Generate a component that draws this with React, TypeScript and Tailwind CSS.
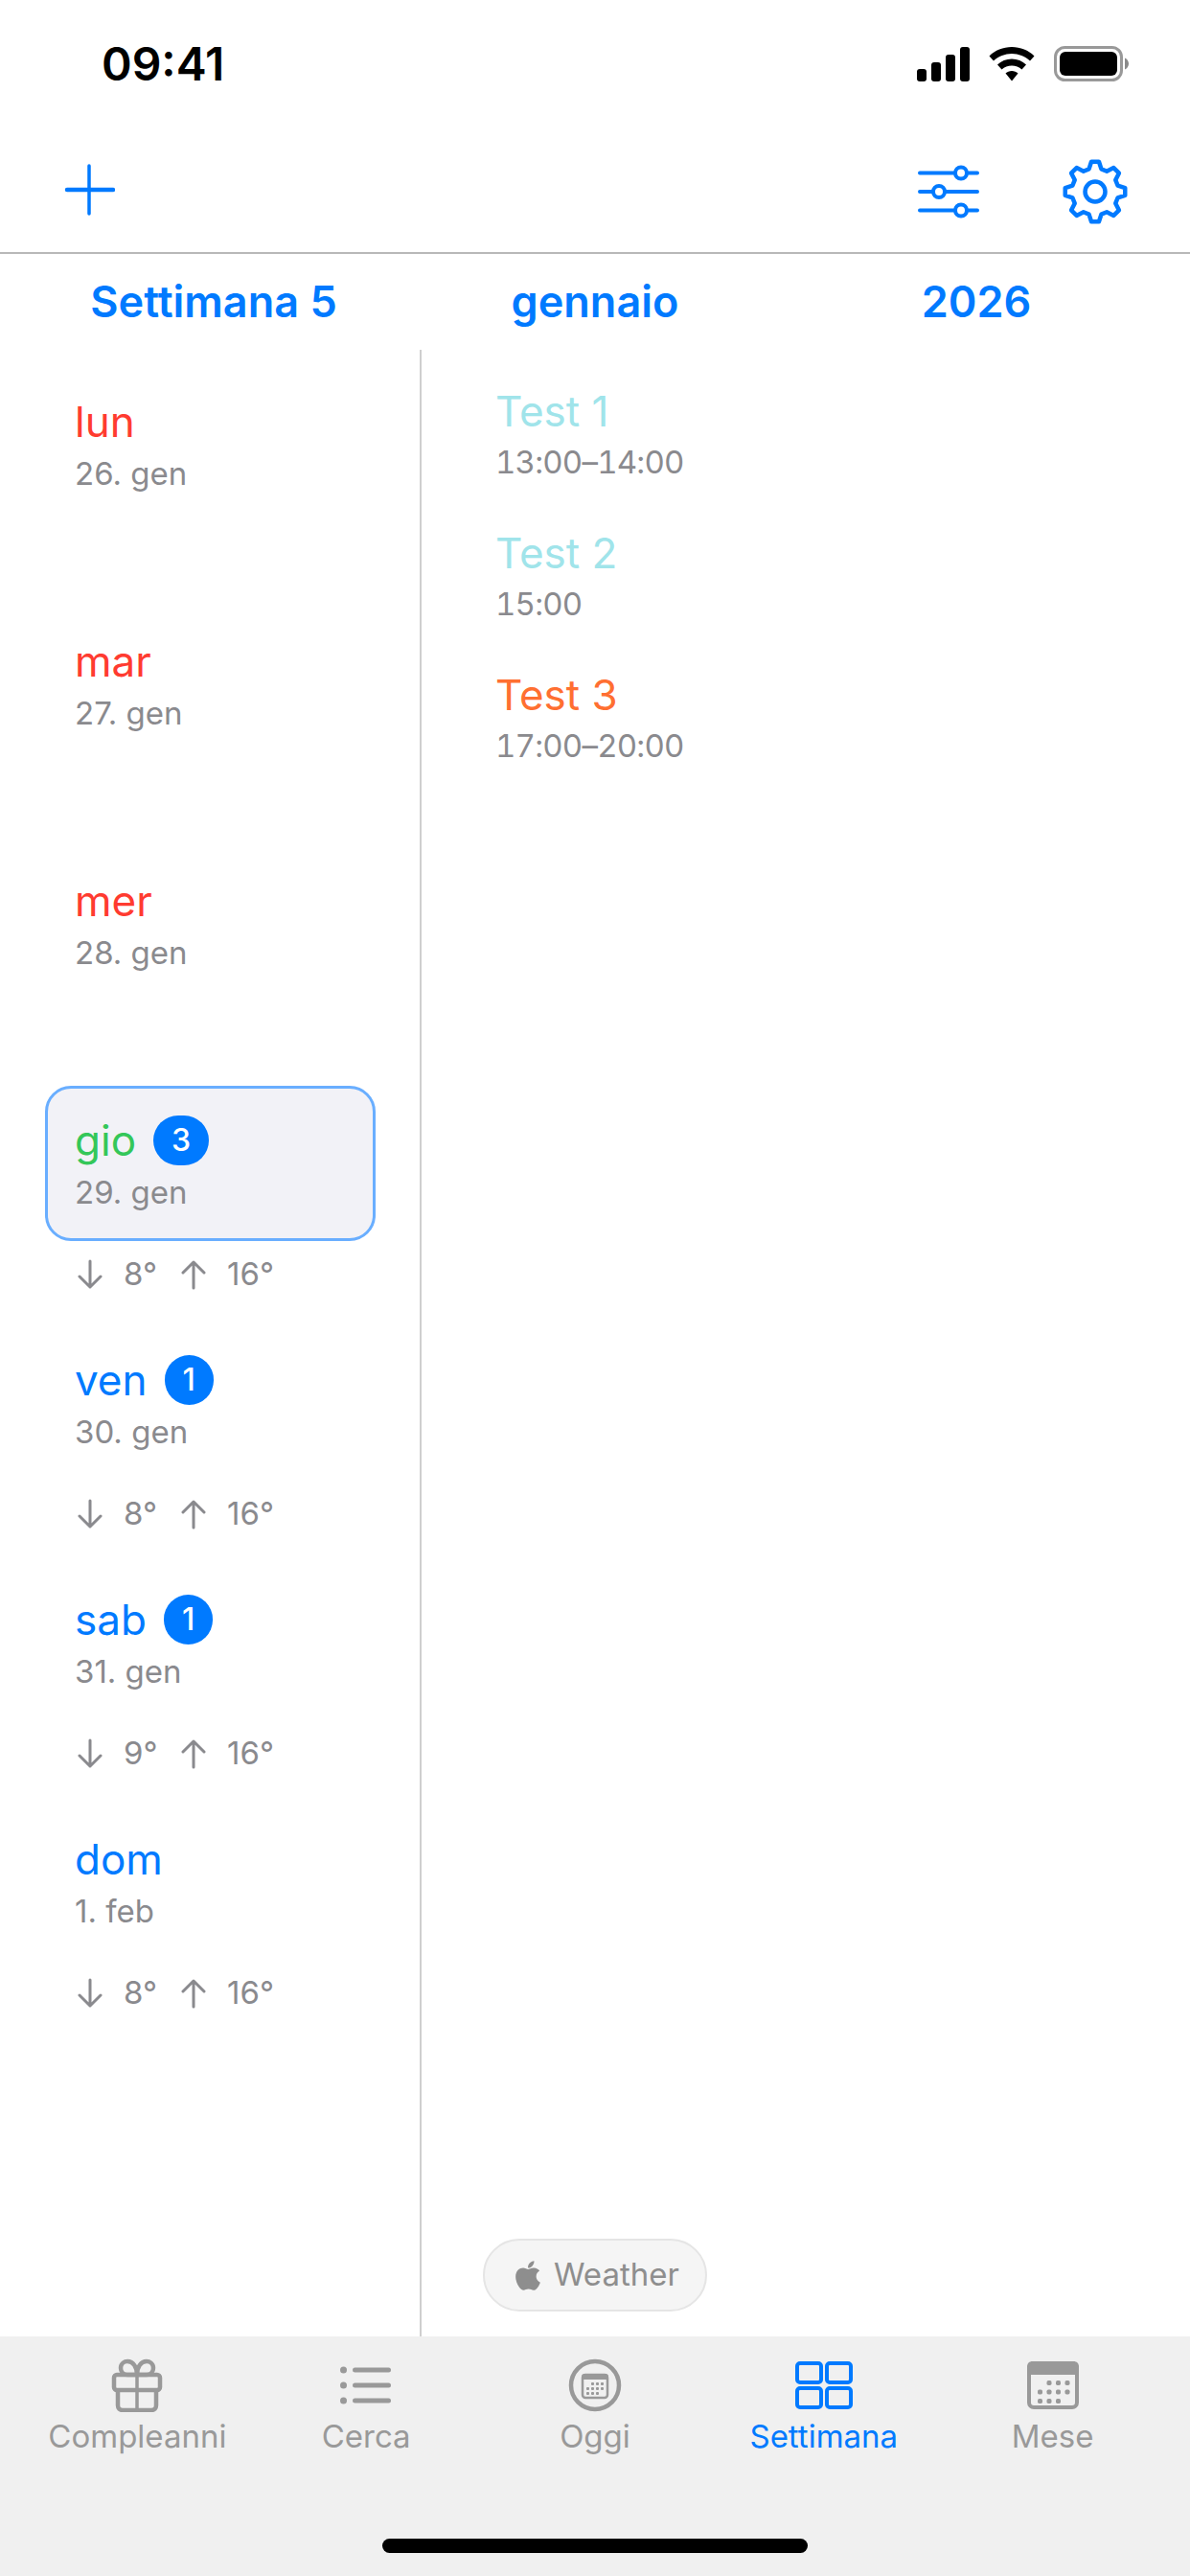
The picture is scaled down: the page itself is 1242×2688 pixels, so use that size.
import React from "react";

const BLUE = "#007aff";
const GREY = "#999999";

function gearPath(cx: number, cy: number) {
  const teeth = 8;
  const pts: string[] = [];
  for (let i = 0; i < teeth; i++) {
    const a = (i / teeth) * Math.PI * 2 - Math.PI / 2;
    const step = (Math.PI * 2) / teeth;
    const list: [number, number][] = [
      [a - step * 0.34, 24.5],
      [a - step * 0.16, 31.5],
      [a + step * 0.16, 31.5],
      [a + step * 0.34, 24.5],
    ];
    list.forEach(([t, r]) => {
      pts.push(`${(cx + Math.cos(t) * r).toFixed(2)} ${(cy + Math.sin(t) * r).toFixed(2)}`);
    });
  }
  return "M" + pts.join("L") + "Z";
}

function Plus() {
  return (
    <svg width="54" height="54" viewBox="0 0 54 54" fill="none" stroke={BLUE} strokeLinecap="round">
      <path d="M27 2V52" strokeWidth="3.5" />
      <path d="M4 27H52" strokeWidth="4.5" />
    </svg>
  );
}

function Sliders() {
  return (
    <svg width="66" height="56" viewBox="0 0 66 56" fill="none" stroke={BLUE} strokeWidth="4" strokeLinecap="round">
      <path d="M2 8.500H62M2 28H62M2 47.500H62" />
      <circle cx="45" cy="8.500" r="6" fill="#fff" />
      <circle cx="22" cy="28" r="6" fill="#fff" />
      <circle cx="45" cy="47.500" r="6" fill="#fff" />
    </svg>
  );
}

function Gear() {
  return (
    <svg width="70" height="70" viewBox="0 0 70 70" fill="none" stroke={BLUE} strokeWidth="4.500" strokeLinejoin="round">
      <path d={gearPath(35, 35)} />
      <circle cx="35" cy="35" r="10.500" />
    </svg>
  );
}

function StatusIcons() {
  return (
    <div className="flex items-center">
      <svg width="56" height="36" viewBox="0 0 56 36" fill="#000">
        <rect x="0" y="23" width="10" height="13" rx="3" />
        <rect x="15" y="16" width="10" height="20" rx="3" />
        <rect x="30" y="8" width="10" height="28" rx="3" />
        <rect x="45" y="0" width="10" height="36" rx="3" />
      </svg>
      <svg className="ml-[19px]" width="48" height="36" viewBox="0 0 48 36" fill="#000">
        <path d="M24 0C33 0 41.500 3.500 47.500 9.500L43 14.500C37.800 9.800 31.200 7 24 7C16.800 7 10.200 9.800 5 14.500L0.500 9.500C6.500 3.500 15 0 24 0Z" />
        <path d="M24 12.500C29.800 12.500 35 14.700 39 18.500L34.500 23.500C31.600 21 28 19.500 24 19.500C20 19.500 16.400 21 13.500 23.500L9 18.500C13 14.700 18.200 12.500 24 12.500Z" />
        <path d="M24 25C26.500 25 28.800 25.900 30.500 27.500L24 35.500L17.500 27.500C19.200 25.900 21.500 25 24 25Z" />
      </svg>
      <svg className="ml-[20px]" width="80" height="38" viewBox="0 0 80 38">
        <rect x="1.500" y="1.500" width="69" height="34" rx="10" fill="none" stroke="#999" strokeWidth="3" />
        <rect x="6" y="6" width="60" height="25" rx="6" fill="#000" />
        <path d="M74 12.500C76.500 13.500 78 16 78 18.500C78 21 76.500 23.500 74 24.500Z" fill="#8a8a8a" />
      </svg>
    </div>
  );
}

function DownArrow() {
  return (
    <svg width="26" height="32" viewBox="0 0 26 32" fill="none" stroke="#8a8a8e" strokeWidth="3" strokeLinecap="round" strokeLinejoin="round">
      <path d="M13 2V29M2 18L13 29L24 18" />
    </svg>
  );
}

function UpArrow() {
  return (
    <svg width="26" height="32" viewBox="0 0 26 32" fill="none" stroke="#8a8a8e" strokeWidth="3" strokeLinecap="round" strokeLinejoin="round">
      <path d="M13 30V3M2 14L13 3L24 14" />
    </svg>
  );
}

function Gift() {
  return (
    <svg width="54" height="56" viewBox="0 0 54 56" fill="none" stroke={GREY} strokeWidth="4.500" strokeLinejoin="round">
      <rect x="3" y="17" width="48" height="16" rx="3" />
      <path d="M7 33V49C7 52 9 54 12 54H42C45 54 47 52 47 49V33" />
      <path d="M27 17V54" strokeWidth="3.500" />
      <path d="M27 17H17C12 17 10 13 10 10C10 5 14 3 17 3C23 3 27 9 27 17ZM27 17H37C42 17 44 13 44 10C44 5 40 3 37 3C31 3 27 9 27 17Z" />
    </svg>
  );
}

function ListIcon() {
  return (
    <svg width="54" height="40" viewBox="0 0 54 40" fill={GREY}>
      <circle cx="3.500" cy="4" r="3.500" />
      <circle cx="3.500" cy="20" r="3.500" />
      <circle cx="3.500" cy="36" r="3.500" />
      <rect x="13" y="1.500" width="40" height="5" rx="2.500" />
      <rect x="13" y="17.500" width="40" height="5" rx="2.500" />
      <rect x="13" y="33.500" width="40" height="5" rx="2.500" />
    </svg>
  );
}

function MiniDots({ x, y, gap, r }: { x: number; y: number; gap: number; r: number }) {
  const cells = [
    [1, 0], [2, 0], [3, 0],
    [0, 1], [1, 1], [2, 1], [3, 1],
    [0, 2], [1, 2], [2, 2],
  ];
  return (
    <>
      {cells.map(([c, w]) => (
        <rect key={`${c}-${w}`} x={x + c * gap} y={y + w * gap} width={r} height={r} rx={r / 3} fill={GREY} />
      ))}
    </>
  );
}

function TodayIcon() {
  return (
    <svg width="56" height="56" viewBox="0 0 56 56" fill="none">
      <circle cx="28" cy="28" r="25" stroke={GREY} strokeWidth="4.500" />
      <rect x="15" y="17" width="26" height="24" rx="3" stroke={GREY} strokeWidth="2.500" />
      <path d="M14 22V19C14 17 15 16 17 16H39C41 16 42 17 42 19V22Z" fill={GREY} />
      <MiniDots x={19} y={25} gap={5} r={3} />
    </svg>
  );
}

function WeekIcon() {
  return (
    <svg width="60" height="50" viewBox="0 0 60 50" fill="none" stroke={BLUE} strokeWidth="4">
      <rect x="2" y="2" width="25" height="20" rx="3" />
      <rect x="33" y="2" width="25" height="20" rx="3" />
      <rect x="2" y="28" width="25" height="20" rx="3" />
      <rect x="33" y="28" width="25" height="20" rx="3" />
    </svg>
  );
}

function MonthIcon() {
  return (
    <svg width="54" height="50" viewBox="0 0 54 50" fill="none">
      <rect x="2" y="2" width="50" height="46" rx="5" stroke={GREY} strokeWidth="4" />
      <path d="M0 14V6C0 2 2 0 6 0H48C52 0 54 2 54 6V14Z" fill={GREY} />
      <MiniDots x={11} y={20} gap={9.500} r={5} />
    </svg>
  );
}

function Badge({ n }: { n: number }) {
  return (
    <span className="ml-[18px] flex h-[52px] items-center justify-center rounded-[26px] bg-[#007aff] px-[19px] text-[32px] font-medium leading-none text-white">
      {n}
    </span>
  );
}

type Day = {
  name: string;
  date: string;
  color: string;
  badge?: number;
  selected?: boolean;
  low?: string;
  high?: string;
};

const days: Day[] = [
  { name: "lun", date: "26. gen", color: "text-[#ff3b30]" },
  { name: "mar", date: "27. gen", color: "text-[#ff3b30]" },
  { name: "mer", date: "28. gen", color: "text-[#ff3b30]" },
  { name: "gio", date: "29. gen", color: "text-[#34c759]", badge: 3, selected: true, low: "8°", high: "16°" },
  { name: "ven", date: "30. gen", color: "text-[#007aff]", badge: 1, low: "8°", high: "16°" },
  { name: "sab", date: "31. gen", color: "text-[#007aff]", badge: 1, low: "9°", high: "16°" },
  { name: "dom", date: "1. feb", color: "text-[#007aff]", low: "8°", high: "16°" },
];

const events = [
  { title: "Test 1", time: "13:00–14:00", color: "text-[#a0e4ea]" },
  { title: "Test 2", time: "15:00", color: "text-[#a0e4ea]" },
  { title: "Test 3", time: "17:00–20:00", color: "text-[#ff6f31]" },
];

function DayRow({ day }: { day: Day }) {
  return (
    <div className="h-[250px]">
      <div
        className={`h-[162px] rounded-[27px] border-[3px] pl-[28px] pt-[27px] ${
          day.selected ? "border-[#69aeff] bg-[#f2f2f7]" : "border-transparent"
        }`}
      >
        <div className={`flex h-[54px] items-center text-[44px] leading-[54px] ${day.color}`}>
          <span>{day.name}</span>
          {day.badge ? <Badge n={day.badge} /> : null}
        </div>
        <div className="mt-[5px] text-[33px] leading-[44px] text-[#8a8a8e]">{day.date}</div>
      </div>
      {day.low ? (
        <div className="mt-[15px] flex h-[40px] items-center pl-[34px] text-[33px] text-[#8a8a8e]">
          <DownArrow />
          <span className="ml-[22px] w-[60px]">{day.low}</span>
          <UpArrow />
          <span className="ml-[22px]">{day.high}</span>
        </div>
      ) : null}
    </div>
  );
}

function Tab({ label, active, children }: { label: string; active?: boolean; children: React.ReactNode }) {
  return (
    <div className="flex flex-1 flex-col items-center">
      <div className="flex h-[56px] items-center justify-center">{children}</div>
      <div className={`mt-[6px] text-[33px] leading-[38px] ${active ? "text-[#007aff]" : "text-[#999999]"}`}>{label}</div>
    </div>
  );
}

export default function App() {
  return (
    <div className="flex h-[2688px] w-[1242px] flex-col overflow-hidden bg-white font-['Inter',sans-serif]">
      <div className="flex h-[134px] items-center justify-between pl-[106px] pr-[62px]">
        <span className="text-[48px] font-semibold leading-none text-black">09:41</span>
        <StatusIcons />
      </div>

      <div className="flex h-[131px] items-start justify-between border-b-2 border-[#b8b8b8] pl-[66px] pr-[64px] pt-[31px]">
        <div className="pt-[6px]">
          <Plus />
        </div>
        <div className="flex items-center">
          <Sliders />
          <div className="ml-[84px]">
            <Gear />
          </div>
        </div>
      </div>

      <div className="grid h-[100px] grid-cols-3 items-center px-[24px] text-center text-[45px] font-semibold text-[#007aff]">
        <span>Settimana 5</span>
        <span>gennaio</span>
        <span>2026</span>
      </div>

      <div className="flex min-h-0 flex-1">
        <div className="w-[440px] shrink-0 border-r-2 border-[#cfcfcf] pl-[47px] pr-[46px] pt-[18px]">
          {days.map((d) => (
            <DayRow key={d.name} day={d} />
          ))}
        </div>
        <div className="flex flex-1 flex-col pl-[77px] pt-[37px]">
          {events.map((e) => (
            <div key={e.title} className="h-[148px]">
              <div className={`text-[44px] leading-[54px] ${e.color}`}>{e.title}</div>
              <div className="mt-[4px] text-[33px] tabular-nums leading-[44px] tracking-[-0.8px] text-[#8a8a8e]">{e.time}</div>
            </div>
          ))}
          <div className="mb-[26px] ml-[-13px] mt-auto flex h-[76px] w-[234px] items-center rounded-[38px] border-2 border-[#e5e5e5] bg-[#f5f5f5] pl-[30px] text-[33px] text-[#8e8e8e]">
            <svg width="30" height="35" viewBox="0 0 384 512" fill="#8e8e8e">
              <path d="M318.700 268.700c-.2-36.700 16.400-64.400 50-84.800-18.800-26.900-47.200-41.700-84.700-44.600-35.500-2.800-74.300 20.700-88.500 20.700-15 0-49.400-19.700-76.400-19.700C63.300 141.200 4 184.800 4 273.500q0 39.300 14.400 81.200c12.800 36.700 59 126.700 107.200 125.200 25.200-.6 43-17.900 75.800-17.900 31.800 0 48.300 17.900 76.400 17.900 48.600-.7 90.400-82.500 102.600-119.300-65.200-30.700-61.700-90-61.700-91.900zm-56.600-164.200c27.300-32.400 24.800-61.900 24-72.500-24.100 1.400-52 16.400-67.900 34.900-17.500 19.800-27.800 44.300-25.600 71.900 26.100 2 49.900-11.400 69.500-34.300z" />
            </svg>
            <span className="ml-[12px]">Weather</span>
          </div>
        </div>
      </div>

      <div className="relative h-[250px] shrink-0 bg-[#f0f0f0] px-[24px] pt-[23px]">
        <div className="flex">
          <Tab label="Compleanni">
            <Gift />
          </Tab>
          <Tab label="Cerca">
            <ListIcon />
          </Tab>
          <Tab label="Oggi">
            <TodayIcon />
          </Tab>
          <Tab label="Settimana" active>
            <WeekIcon />
          </Tab>
          <Tab label="Mese">
            <MonthIcon />
          </Tab>
        </div>
        <div className="absolute bottom-[24px] left-[399px] h-[15px] w-[444px] rounded-full bg-black" />
      </div>
    </div>
  );
}
